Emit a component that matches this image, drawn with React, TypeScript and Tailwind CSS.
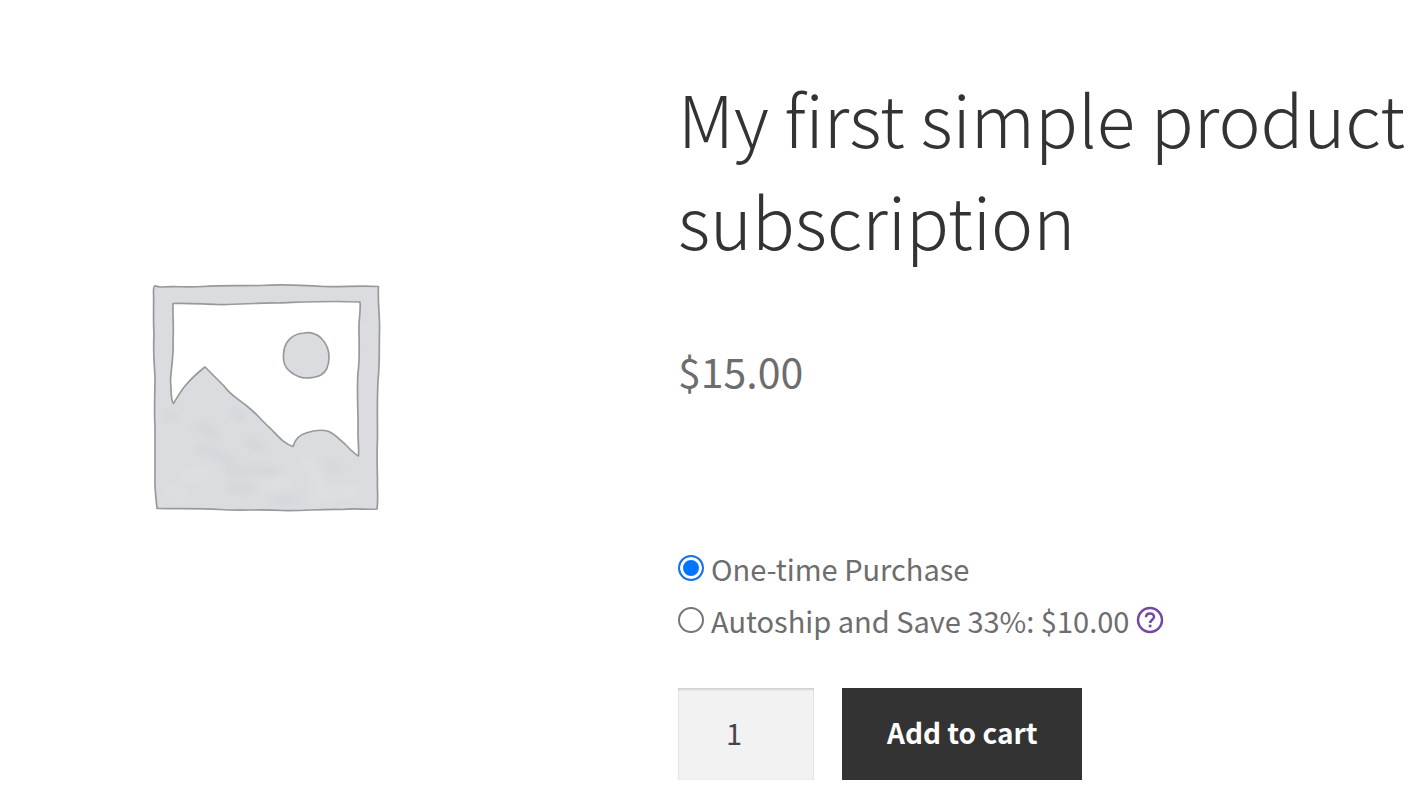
import { useState } from "react";

function PlaceholderImage() {
  return (
    <svg viewBox="0 0 250 250" className="w-[250px] max-w-full" role="img" aria-label="Awaiting product image">
      <defs>
        <filter id="smudge" x="-50%" y="-50%" width="200%" height="200%">
          <feGaussianBlur stdDeviation="4" />
        </filter>
        <filter id="rim" x="-5%" y="-5%" width="110%" height="110%">
          <feGaussianBlur stdDeviation="0.7" />
        </filter>
        <clipPath id="frame">
          <path d="M14 16H238V239H17Z" />
        </clipPath>
      </defs>
      <g stroke="#98999b" strokeWidth="1.700" strokeLinejoin="round" fill="#dbdce0" filter="url(#rim)">
        <path
          fillRule="evenodd"
          d="M14.500 16C16 15.500 18 17 20 17C34 16 48 17.500 63 16.500C83 15 101 16 120 15.500C142 14 163 15 184 16.500C202 17 220 15.500 238.500 16.500C237.500 31 240 46 239.500 61C239 78 240 91 238 111C237 129 237.500 148 237.500 166C237 180 237 195 237.500 210C237 221 238.500 230 237 239C226 240 216 238 202 239.500C180 239 163 241 143 240.500C120 239 100 241 80 239.500C57 238 37 239 17 238.500C16 228 14.500 218 15 207C15 190 15 174 15 157C14 141 15 123 15 106C14 91 13 80 14 64C13 48 14 33 13.500 22C13.500 19 13.500 17 14.500 16ZM33 33.500C48 33 60 34 77 34.500C98 35 118 32.500 138 33C166 32 190 30.500 220 32C221 41 218.500 49 219 60C219 74 220 88 218 103C216.500 123 218.500 143 218 162C218 171 219 179 218.500 186C213 183 209 178 205 174C200 170 196 165 189 161.500C182 159.500 174 160 166 163C159 165 155 169 153 176.500C144 174 138 166 130 158C122 151 117 144 108 137C100 130 91 126 84 116C78 110 72 104 65 97C56 104 50 110 45 116C40 122 37 128 33.500 133.500C30.500 131 31.500 120 30.500 111C31 98 34 85 33 70C34 57 32.500 44 33 33.500Z"
        />
        <path d="M164 63C170 62 176 63.500 181 68C186 73 189 80 189 87C189 95 186 102 181 105C176 108 170 108 164 108C158 107 151 103 147 98.500C142.500 93 143 86 144 80C146 70 154 63.500 164 63Z" />
      </g>
      <g clipPath="url(#frame)" filter="url(#smudge)" fill="none" strokeLinecap="round">
        <path d="M58 157C66 153 69 162 77 167M58 179C70 179 80 187 94 191M94 142L102 147M107 171L121 178M88 201L137 201M90 218L112 219M188 195L200 200M27 145L34 148M134 231L156 229" stroke="#cfd1d6" strokeWidth="5" />
        <path d="M45 205L70 202M120 218L148 211M167 190L181 218M28 220L42 226M172 227L216 222" stroke="#e0e1e5" strokeWidth="6" />
      </g>
    </svg>
  );
}

function HelpIcon() {
  return (
    <svg viewBox="0 0 28 28" className="size-7" fill="none" stroke="#7048a6" aria-hidden="true">
      <circle cx="14" cy="14" r="12" strokeWidth="2.500" />
      <path d="M10 11.300C10 8.800 11.700 7.400 14 7.400C16.300 7.400 18 8.900 18 11C18 13.600 14.100 13.900 14.100 17" strokeWidth="2.500" />
      <path d="M14.100 18.700V21.300" strokeWidth="2.700" />
    </svg>
  );
}

const radioClass =
  "size-[26px] shrink-0 appearance-none rounded-full border-2 border-[#767676] bg-white checked:border-[#1a73e8] checked:bg-[#0075ff] checked:shadow-[inset_0_0_0_3px_white]";

export default function App() {
  const [plan, setPlan] = useState("once");
  const [quantity, setQuantity] = useState("1");

  return (
    <main className="grid min-h-screen grid-cols-[530fr_732fr] gap-x-[148px] bg-white font-['Noto_Sans_CJK_SC',sans-serif] text-[#6d6d6d]">
      <div className="flex justify-center pt-[270px]">
        <div>
          <PlaceholderImage />
        </div>
      </div>

      <section className="min-w-0 pt-[66px]">
        <h1 className="text-[71px] leading-[102px] font-light text-[#333333]">My first simple product subscription</h1>
        <p className="mt-[68px] text-[41px] leading-[64px]">$15.00</p>

        <form onSubmit={(event) => event.preventDefault()}>
          <fieldset aria-label="Purchase options" className="mt-[140px] text-[29px] leading-[52px]">
            <div className="flex items-center gap-[7px]">
              <input id="once" type="radio" name="plan" checked={plan === "once"} onChange={() => setPlan("once")} className={radioClass} />
              <label htmlFor="once">One-time Purchase</label>
            </div>
            <div className="flex items-center gap-[7px]">
              <input id="autoship" type="radio" name="plan" checked={plan === "autoship"} onChange={() => setPlan("autoship")} className={radioClass} />
              <label htmlFor="autoship">Autoship and Save 33%: $10.00</label>
              <button type="button" aria-label="About Autoship">
                <HelpIcon />
              </button>
            </div>
          </fieldset>

          <div className="mt-[42px] flex gap-7">
            <input
              type="text"
              inputMode="numeric"
              aria-label="Quantity"
              value={quantity}
              onChange={(event) => setQuantity(event.target.value)}
              className="h-[92px] w-[136px] bg-[#f2f2f2] pr-6 pb-1 text-center text-[29px] text-[#43454b] shadow-[inset_0_2px_2px_rgba(0,0,0,0.125),inset_0_0_1px_rgba(0,0,0,0.2)]"
            />
            <button type="submit" className="h-[92px] bg-[#333333] px-[45px] pb-1 text-[28px] font-bold text-white">
              Add to cart
            </button>
          </div>
        </form>
      </section>
    </main>
  );
}
